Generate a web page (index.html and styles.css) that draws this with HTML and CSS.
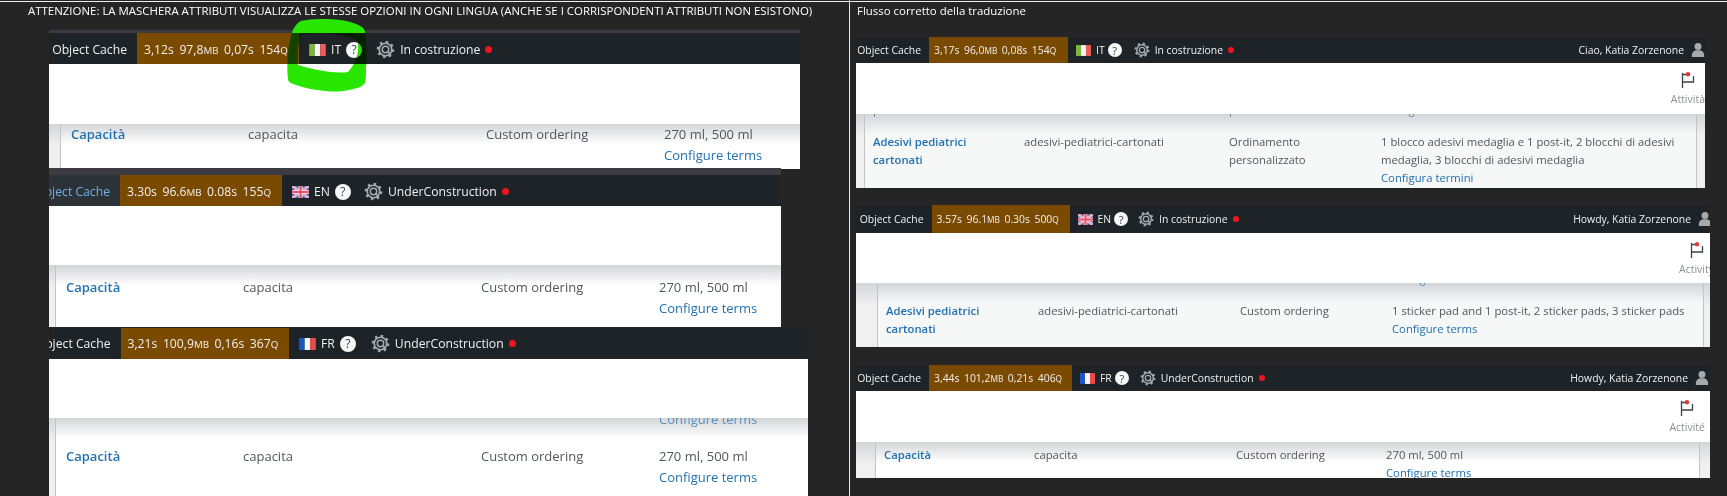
FILE: index.html
```html
<!DOCTYPE html>
<html lang="en">
<head>
    <meta charset="UTF-8">
    <meta name="viewport" content="width=device-width, initial-scale=1.0">
    <title>Flusso della traduzione</title>
    <link rel="stylesheet" href="styles.css">
</head>
<body>

    <svg class="icon-defs" aria-hidden="true">
        <symbol id="flag-it" viewBox="0 0 18 13">
            <rect width="6" height="13" fill="#7fb53a"/>
            <rect x="6" width="6" height="13" fill="#f4f4f4"/>
            <rect x="12" width="6" height="13" fill="#ef5a5a"/>
        </symbol>
        <symbol id="flag-en" viewBox="0 0 18 13">
            <rect width="18" height="13" fill="#4a5fa8"/>
            <path d="M0 0L18 13M18 0L0 13" stroke="#f3dfe6" stroke-width="3"/>
            <path d="M0 0L18 13M18 0L0 13" stroke="#ee5f78" stroke-width="1"/>
            <path d="M9 0V13M0 6.500H18" stroke="#f3dfe6" stroke-width="4.400"/>
            <path d="M9 0V13M0 6.500H18" stroke="#ee4f6c" stroke-width="2.400"/>
        </symbol>
        <symbol id="flag-fr" viewBox="0 0 18 13">
            <rect width="6" height="13" fill="#1f55c4"/>
            <rect x="6" width="6" height="13" fill="#f6f6f6"/>
            <rect x="12" width="6" height="13" fill="#ee4a4a"/>
        </symbol>
        <symbol id="gear" viewBox="0 0 20 20">
            <circle cx="10" cy="10" r="6.600" fill="none" stroke="#a7aaad" stroke-width="1.800"/>
            <circle cx="10" cy="10" r="8" fill="none" stroke="#a7aaad" stroke-width="2.600" stroke-dasharray="2.600 3.680"/>
            <circle cx="10" cy="10" r="3.400" fill="none" stroke="#a7aaad" stroke-width="1.600"/>
            <path d="M12 12l3.600 3.400" stroke="#a7aaad" stroke-width="1.800"/>
        </symbol>
        <symbol id="avatar" viewBox="0 0 16 18">
            <circle cx="8" cy="5" r="4" fill="#a7aaad"/>
            <path d="M1 17c-.6-5 2-7 4.600-7.600h4.800C13 10 15.600 12 15 17z" fill="#a7aaad"/>
        </symbol>
        <symbol id="activity" viewBox="0 0 14 16">
            <path d="M1.500 1V16M1.500 2.500H5M1.500 10H12.500V4" fill="none" stroke="#3c434a" stroke-width="1.300"/>
            <circle cx="7" cy="2.200" r="2.200" fill="#e2363c"/>
        </symbol>
        <path id="ring" fill-rule="evenodd" d="M301 21C312 18 342 18 353 23C360 25 365 28 365 32C367 45 367 60 366 67C366 74 366 80 365 83C362 87 358 88 353 89C342 92 335 92 325 91C315 90 304 88 296 85C292 84 289 82 288 80C287 70 287 62 288 53C289 43 291 35 293 30C295 26 298 22 301 21ZM300 36C315 30 345 34 358 41C359 52 357 62 348 72C335 74 315 70 298 65C297 55 298 45 300 36Z"/>
    </svg>

    <div class="top-line"></div>
    <div class="divider"></div>

    <p class="note note-left">ATTENZIONE: LA MASCHERA ATTRIBUTI VISUALIZZA LE STESSE OPZIONI IN OGNI LINGUA (ANCHE SE I CORRISPONDENTI ATTRIBUTI NON ESISTONO)</p>
    <p class="note note-right">Flusso corretto della traduzione</p>

    <!-- left column: before -->
    <section class="shot shot-l1">
        <div class="strip"></div>
        <div class="bar">
            <div class="bar-cache"><span>Object Cache</span></div>
            <div class="bar-perf"><span>3,12s</span><span>97,8<small>MB</small></span><span>0,07s</span><span>154<small>Q</small></span></div>
            <div class="bar-lang"><svg class="flag"><use href="#flag-it"/></svg><span>IT</span><i class="help">?</i></div>
            <div class="bar-site"><svg class="gear"><use href="#gear"/></svg><span>In costruzione</span><i class="dot"></i></div>
        </div>
        <div class="header"></div>
        <div class="content">
            <div class="table">
                <div class="row">
                    <a class="name">Capacità</a>
                    <span>capacita</span>
                    <span>Custom ordering</span>
                    <div><span>270 ml, 500 ml</span><a class="terms">Configure terms</a></div>
                </div>
            </div>
        </div>
    </section>

    <section class="shot shot-l2">
        <div class="strip"></div>
        <div class="bar">
            <div class="bar-cache is-hover"><span>Object Cache</span></div>
            <div class="bar-perf"><span>3.30s</span><span>96.6<small>MB</small></span><span>0.08s</span><span>155<small>Q</small></span></div>
            <div class="bar-lang"><svg class="flag"><use href="#flag-en"/></svg><span>EN</span><i class="help">?</i></div>
            <div class="bar-site"><svg class="gear"><use href="#gear"/></svg><span>UnderConstruction</span><i class="dot"></i></div>
        </div>
        <div class="header"></div>
        <div class="content">
            <div class="table">
                <div class="row">
                    <a class="name">Capacità</a>
                    <span>capacita</span>
                    <span>Custom ordering</span>
                    <div><span>270 ml, 500 ml</span><a class="terms">Configure terms</a></div>
                </div>
            </div>
        </div>
    </section>

    <section class="shot shot-l3">
        <div class="bar">
            <div class="bar-cache"><span>Object Cache</span></div>
            <div class="bar-perf"><span>3,21s</span><span>100,9<small>MB</small></span><span>0,16s</span><span>367<small>Q</small></span></div>
            <div class="bar-lang"><svg class="flag"><use href="#flag-fr"/></svg><span>FR</span><i class="help">?</i></div>
            <div class="bar-site"><svg class="gear"><use href="#gear"/></svg><span>UnderConstruction</span><i class="dot"></i></div>
        </div>
        <div class="header"></div>
        <div class="content">
            <div class="table">
                <div class="row row-ghost">
                    <span></span><span></span><span></span>
                    <a class="terms">Configure terms</a>
                </div>
                <div class="row">
                    <a class="name">Capacità</a>
                    <span>capacita</span>
                    <span>Custom ordering</span>
                    <div><span>270 ml, 500 ml</span><a class="terms">Configure terms</a></div>
                </div>
            </div>
        </div>
    </section>

    <!-- right column: expected -->
    <section class="shot shot-r shot-r1">
        <div class="bar">
            <div class="bar-cache"><span>Object Cache</span></div>
            <div class="bar-perf"><span>3,17s</span><span>96,0<small>MB</small></span><span>0,08s</span><span>154<small>Q</small></span></div>
            <div class="bar-lang"><svg class="flag"><use href="#flag-it"/></svg><span>IT</span><i class="help">?</i></div>
            <div class="bar-site"><svg class="gear"><use href="#gear"/></svg><span>In costruzione</span><i class="dot"></i></div>
            <div class="bar-user"><span>Ciao, Katia Zorzenone</span><svg class="avatar"><use href="#avatar"/></svg></div>
        </div>
        <div class="header">
            <div class="activity"><svg><use href="#activity"/></svg><span>Attività</span></div>
        </div>
        <div class="content">
            <div class="table">
                <div class="row row-ghost">
                    <span>p</span><span></span><span>p</span>
                    <a class="terms">Configura</a>
                </div>
                <div class="row">
                    <a class="name">Adesivi pediatrici cartonati</a>
                    <span>adesivi-pediatrici-cartonati</span>
                    <span>Ordinamento personalizzato</span>
                    <div><span>1 blocco adesivi medaglia e 1 post-it, 2 blocchi di adesivi medaglia, 3 blocchi di adesivi medaglia</span><a class="terms">Configura termini</a></div>
                </div>
            </div>
        </div>
    </section>

    <section class="shot shot-r shot-r2">
        <div class="bar">
            <div class="bar-cache"><span>Object Cache</span></div>
            <div class="bar-perf"><span>3.57s</span><span>96.1<small>MB</small></span><span>0.30s</span><span>500<small>Q</small></span></div>
            <div class="bar-lang"><svg class="flag"><use href="#flag-en"/></svg><span>EN</span><i class="help">?</i></div>
            <div class="bar-site"><svg class="gear"><use href="#gear"/></svg><span>In costruzione</span><i class="dot"></i></div>
            <div class="bar-user"><span>Howdy, Katia Zorzenone</span><svg class="avatar"><use href="#avatar"/></svg></div>
        </div>
        <div class="header">
            <div class="activity"><svg><use href="#activity"/></svg><span>Activity</span></div>
        </div>
        <div class="content">
            <div class="table">
                <div class="row row-ghost">
                    <span></span><span></span><span></span>
                    <a class="terms">Configure</a>
                </div>
                <div class="row">
                    <a class="name">Adesivi pediatrici cartonati</a>
                    <span>adesivi-pediatrici-cartonati</span>
                    <span>Custom ordering</span>
                    <div><span>1 sticker pad and 1 post-it, 2 sticker pads, 3 sticker pads</span><a class="terms">Configure terms</a></div>
                </div>
            </div>
        </div>
    </section>

    <section class="shot shot-r shot-r3">
        <div class="bar">
            <div class="bar-cache"><span>Object Cache</span></div>
            <div class="bar-perf"><span>3,44s</span><span>101,2<small>MB</small></span><span>0,21s</span><span>406<small>Q</small></span></div>
            <div class="bar-lang"><svg class="flag"><use href="#flag-fr"/></svg><span>FR</span><i class="help">?</i></div>
            <div class="bar-site"><svg class="gear"><use href="#gear"/></svg><span>UnderConstruction</span><i class="dot"></i></div>
            <div class="bar-user"><span>Howdy, Katia Zorzenone</span><svg class="avatar"><use href="#avatar"/></svg></div>
        </div>
        <div class="header">
            <div class="activity"><svg><use href="#activity"/></svg><span>Activité</span></div>
        </div>
        <div class="content">
            <div class="table">
                <div class="row">
                    <a class="name">Capacità</a>
                    <span>capacita</span>
                    <span>Custom ordering</span>
                    <div><span>270 ml, 500 ml</span><a class="terms">Configure terms</a></div>
                </div>
            </div>
        </div>
    </section>

    <!-- green marker around the language switcher -->
    <svg class="scribble" viewBox="0 0 1727 496"><use href="#ring" clip-path="url(#outside-bar)"/>
        <clipPath id="outside-bar"><rect x="280" y="0" width="100" height="33"/><rect x="280" y="64" width="100" height="40"/></clipPath>
    </svg>
    <svg class="scribble scribble-dark" viewBox="0 0 1727 496"><use href="#ring" clip-path="url(#inside-bar)"/>
        <clipPath id="inside-bar"><rect x="280" y="33" width="100" height="31"/></clipPath>
    </svg>

</body>
</html>
```

FILE: styles.css
```css
html, body {
    height: 100%;
}

body {
    margin: 0;
    position: relative;
    height: 496px;
    overflow: hidden;
    background-color: #252525;
    font-family: "Open Sans", "Liberation Sans", sans-serif;
    color: #50575e;
}

.icon-defs {
    position: absolute;
    width: 0;
    height: 0;
}

.top-line {
    position: absolute;
    left: 0;
    top: 1px;
    width: 100%;
    height: 1px;
    background-color: #f0f0f0;
}

.divider {
    position: absolute;
    left: 849px;
    top: 0;
    width: 1px;
    height: 100%;
    background-color: #e8e8e8;
}

.note {
    position: absolute;
    margin: 0;
    color: #fff;
    font-size: 11.450px;
    line-height: 16px;
    white-space: nowrap;
}

.note-left {
    left: 28px;
    top: 3px;
}

.note-right {
    left: 857px;
    top: 3px;
}

/* pasted screenshots: each one sits at its own place on the collage */
.shot {
    position: absolute;
    display: flex;
    flex-direction: column;
    overflow: hidden;
    font-size: 13px;
    --cache: 88px;
    --perf: 162px;
    --perf-pad: 7px;
    --perf-gap: 5.500px;
    --lang-pad: 10px;
    --site-pad: 14px;
    --bar-nudge: 0px;
    --cols: 177px 238px 178px 1fr;
    --pad-left: 11px;
    --pad-right: 0px;
    --row-pad: 0px;
    --user-end: 0px;
    --activity-end: 0px;
}

.shot-l1 { left: 49px; top: 30px; width: 751px; height: 139px; --header: 60px; --bar-nudge: 2px; }
.shot-l2 { left: 49px; top: 168px; width: 732px; height: 159px; --cache: 71px; --site-pad: 13px; --pad-left: 6px; --header: 59px; --row-pad: 12px; --bar-nudge: 2px; }
.shot-l3 { left: 49px; top: 328px; width: 759px; height: 168px; --cache: 71.500px; --perf: 168.500px; --site-pad: 15px; --pad-left: 6px; --header: 59px; }

.shot-r {
    font-size: 11.300px;
    --perf-pad: 5px;
    --perf-gap: 4.500px;
    --lang-pad: 8px;
    --site-pad: 12px;
}

.shot-r1 { left: 856px; top: 37px; width: 849px; height: 151px; --cache: 73px; --perf: 139px; --cols: 151px 205px 152px 1fr; --pad-left: 8px; --pad-right: 8px; --header: 51px; --row-pad: 15px; }
.shot-r2 { left: 856px; top: 205px; width: 854px; height: 142px; --cache: 75.500px; --perf: 138px; --site-pad: 10px; --cols: 152px 202px 152px 1fr; --pad-left: 21px; --pad-right: 6px; --header: 50px; --row-pad: 15px; --user-end: -2px; --activity-end: -4px; }
.shot-r3 { left: 856px; top: 365px; width: 854px; height: 113px; --cache: 73px; --perf: 143px; --site-pad: 11px; --cols: 150px 202px 150px 1fr; --pad-left: 19px; --pad-right: 10px; --header: 51px; --row-pad: 4px; --user-end: 1px; --activity-end: 5px; }

.strip {
    flex: none;
    height: 3px;
    background-color: #3c3b42;
}

.shot-l2 .strip {
    height: 7px;
}

.bar {
    flex: none;
    display: flex;
    align-items: stretch;
    height: 31px;
    font-size: 12.200px;
    color: #f0f0f1;
    background-color: #1d2327;
}

.shot-r .bar { font-size: 10.400px; }
.shot-r1 .bar { height: 26px; }
.shot-r2 .bar { height: 28px; }
.shot-r3 .bar { height: 26px; }

.bar > div {
    display: flex;
    align-items: center;
    padding-top: var(--bar-nudge);
    white-space: nowrap;
}

.bar-cache {
    flex: none;
    justify-content: flex-end;
    width: var(--cache);
    padding-right: 10px;
    box-sizing: border-box;
    overflow: hidden;
}

.shot-r .bar-cache {
    padding-right: 8px;
}

.is-hover {
    color: #72aee6;
    background-color: #2c3338;
}

.bar-perf {
    flex: none;
    gap: var(--perf-gap);
    width: var(--perf);
    padding-left: var(--perf-pad);
    box-sizing: border-box;
    background-color: #7a4a00;
}

.bar-perf small {
    font-size: .8em;
}

.bar-lang {
    gap: 5px;
    padding-left: var(--lang-pad);
}

.flag {
    width: 17px;
    height: 12px;
}

.shot-r .flag {
    width: 15px;
    height: 11px;
}

.help {
    display: flex;
    align-items: center;
    justify-content: center;
    width: 16px;
    height: 16px;
    border-radius: 50%;
    background-color: #f6f7f7;
    color: #3c434a;
    font-size: 12px;
    font-style: normal;
}

.shot-r .help {
    width: 14px;
    height: 14px;
    margin-left: -2px;
    font-size: 11px;
}

.bar-site {
    gap: 5px;
    padding-left: var(--site-pad);
}

.gear {
    width: 19px;
    height: 19px;
}

.shot-r .gear {
    width: 16px;
    height: 16px;
}

.dot {
    width: 7px;
    height: 7px;
    border-radius: 50%;
    background-color: #f0141e;
}

.shot-r .dot {
    width: 6px;
    height: 6px;
}

.bar-user {
    margin-left: auto;
    margin-right: var(--user-end);
    gap: 7px;
}

.avatar {
    flex: none;
    width: 14px;
    height: 16px;
}

.header {
    flex: none;
    display: flex;
    justify-content: flex-end;
    height: var(--header);
    background-color: #fff;
}

.activity {
    display: flex;
    flex-direction: column;
    align-items: center;
    gap: 4px;
    margin-right: var(--activity-end);
    padding-top: 9px;
    font-size: 10.500px;
    line-height: 15px;
    color: #8c8f94;
}

.activity svg {
    width: 14px;
    height: 16px;
}

.content {
    flex: 1;
    min-height: 0;
    padding-left: var(--pad-left);
    padding-right: var(--pad-right);
    background: linear-gradient(#d4d5d8, #f0f0f1 22px);
}

.table {
    height: 100%;
    overflow: hidden;
    border-left: 1px solid #c3c4c7;
    background: linear-gradient(#d4d5d8, #fff 20px);
}

.shot-r .table {
    border-right: 1px solid #c3c4c7;
    background: linear-gradient(#d4d5d8, #f6f7f7 20px);
}

.shot-r3 .table {
    background: linear-gradient(#d4d5d8, #fff 20px);
}

.row {
    display: grid;
    grid-template-columns: var(--cols);
    padding: var(--row-pad) 10px 0;
    line-height: 21px;
}

.shot-r .row {
    padding: var(--row-pad) 8px 0;
    line-height: 18px;
}

.shot-r .row > :nth-child(-n+3) {
    padding-right: 22px;
}

.row > div span,
.terms {
    display: block;
}

.name {
    font-weight: 600;
    color: #2271b1;
}

.terms {
    color: #2271b1;
}

/* tail of the row scrolled under the header */
.row-ghost {
    padding-top: 0;
    height: 21px;
    line-height: 2px;
    opacity: .7;
}

.shot-r .row-ghost {
    margin-top: -4px;
    padding-top: 0;
    height: 8px;
    line-height: 0;
}

.shot-l3 .row + .row {
    padding-top: 7px;
}

.scribble {
    position: absolute;
    left: 0;
    top: 0;
    width: 1727px;
    height: 496px;
    fill: #28e600;
    pointer-events: none;
}

.scribble-dark {
    mix-blend-mode: multiply;
}
```
